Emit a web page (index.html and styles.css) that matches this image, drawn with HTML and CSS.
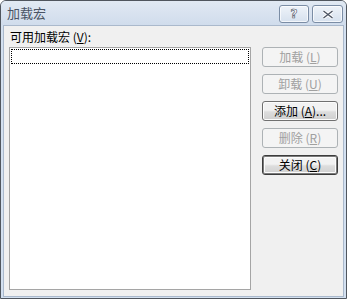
FILE: index.html
```html
<!DOCTYPE html>
<html lang="zh-CN">
<head>
    <meta charset="UTF-8">
    <title>加载宏</title>
    <link rel="stylesheet" href="styles.css">
</head>
<body>
    <div class="window">
        <div class="titlebar">
            <span class="title">加载宏</span>
            <div class="caption-buttons">
                <button class="cap-btn">?</button>
                <button class="cap-btn">
                    <svg width="12" height="9" viewBox="0 0 12 9">
                        <path d="M1.5 1 L10.5 8 M10.5 1 L1.5 8" stroke="#fff" stroke-width="3.2"/>
                        <path d="M1.5 1 L10.5 8 M10.5 1 L1.5 8" stroke="#4d5564" stroke-width="1.4"/>
                    </svg>
                </button>
            </div>
        </div>
        <div class="client">
            <div class="list-col">
                <div class="list-label">可用加载宏 (<u>V</u>):</div>
                <div class="listbox">
                    <div class="focus-row"></div>
                </div>
            </div>
            <div class="btn-col">
                <button class="btn" disabled>加载 (<u>L</u>)</button>
                <button class="btn" disabled>卸载 (<u>U</u>)</button>
                <button class="btn">添加 (<u>A</u>)...</button>
                <button class="btn" disabled>删除 (<u>R</u>)</button>
                <button class="btn btn-default">关闭 (<u>C</u>)</button>
            </div>
        </div>
    </div>
</body>
</html>
```

FILE: styles.css
```css
* {
    margin: 0;
    padding: 0;
    box-sizing: border-box;
}

body {
    font-family: "Noto Sans CJK SC", "DejaVu Sans", sans-serif;
    font-size: 12px;
    color: #000;
    background: #fff;
}

.window {
    width: 347px;
    height: 299px;
    border: 1px solid #50565e;
    border-radius: 6px 6px 0 0;
    background: #d3e0f0;
    display: flex;
    flex-direction: column;
}

.titlebar {
    height: 24px;
    display: flex;
    align-items: flex-start;
    justify-content: space-between;
    background: linear-gradient(#e1e9f3, #d0dcec);
    border-radius: 5px 5px 0 0;
}

.title {
    padding: 4px 0 0 6px;
    color: #4a5464;
    font-size: 13px;
    line-height: 15px;
}

.caption-buttons {
    display: flex;
    gap: 3px;
    padding: 4px 3px 0 0;
}

.cap-btn {
    width: 31px;
    height: 18px;
    border: 1px solid #7b8da5;
    border-radius: 3px;
    background: linear-gradient(#eef3f9, #d6e1ee);
    box-shadow: inset 0 0 0 1px rgba(255,255,255,0.7);
    display: flex;
    align-items: center;
    justify-content: center;
    font-family: "DejaVu Sans", sans-serif;
    font-weight: bold;
    font-size: 12px;
    color: #fff;
    -webkit-text-stroke: 0.6px #4d5564;
}

.cap-btn:first-child {
    width: 30px;
}

.client {
    flex: 1;
    margin: 0 2px 1px 2px;
    background: #f0f0f0;
    border: 1px solid #aab9cc;
    display: flex;
    padding: 4px 5px 6px 5px;
    gap: 11px;
}

.list-col {
    display: flex;
    flex-direction: column;
    width: 242px;
}

.list-label {
    height: 17px;
    line-height: 14px;
    padding-left: 1px;
}

.list-label u {
    text-decoration: underline;
}

.listbox {
    flex: 1;
    background: #fff;
    border: 1px solid #a5a5a5;
    padding: 1px;
}

.focus-row {
    height: 15px;
    border: 1px dotted #000;
}

.btn-col {
    display: flex;
    flex-direction: column;
    gap: 7px;
    padding-top: 17px;
}

.btn {
    width: 76px;
    height: 20px;
    border: 1px solid #707070;
    border-radius: 3px;
    background: linear-gradient(#f2f2f2 45%, #dddddd 55%, #cfcfcf);
    box-shadow: inset 0 0 0 1px #fcfcfc;
    font-family: inherit;
    font-size: 12px;
    line-height: 14px;
    color: #000;
}

.btn:disabled {
    background: #f4f4f4;
    border-color: #adb2b5;
    box-shadow: none;
    color: #a0a0a0;
}

.btn-default {
    border-color: #3c3c3c;
    box-shadow: inset 0 0 0 1px #7a7a7a, inset 0 0 0 2px #fcfcfc;
}
```
